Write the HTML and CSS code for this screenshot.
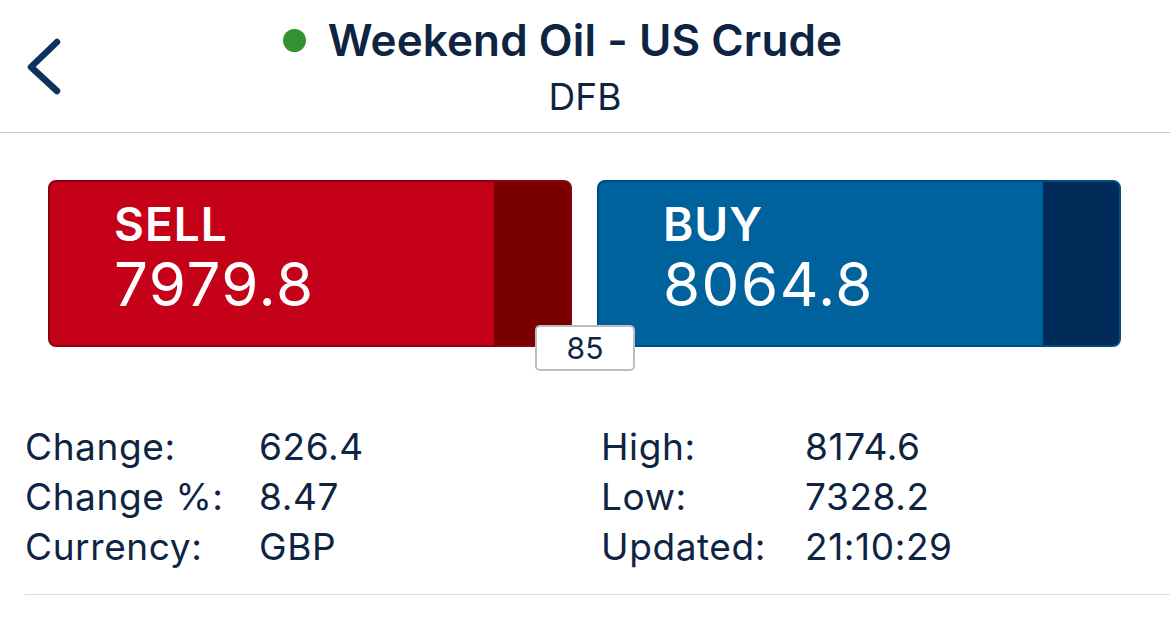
FILE: index.html
```html
<!DOCTYPE html>
<html lang="en">
<head>
  <meta charset="UTF-8" />
  <meta name="viewport" content="width=device-width, initial-scale=1.0" />
  <title>Weekend Oil - US Crude</title>
  <link rel="stylesheet" href="styles.css">
</head>
<body>
  <div class="header">
    <button class="back-btn" aria-label="Back">
      <svg width="44" height="62" viewBox="0 0 44 62">
        <polyline points="37,6 11,31 37,55" fill="none" stroke="#0d3260" stroke-width="6.5" stroke-linecap="round" stroke-linejoin="round" />
      </svg>
    </button>
    <div class="title-block">
      <h1 class="market-name">Weekend Oil - US Crude</h1>
      <div class="market-type">DFB</div>
    </div>
  </div>

  <div class="deal-row">
    <div class="deal-btn sell">
      <div class="deal-main">
        <div class="deal-label">SELL</div>
        <div class="deal-price">7979.8</div>
      </div>
      <div class="deal-strip"></div>
    </div>
    <div class="deal-btn buy">
      <div class="deal-main">
        <div class="deal-label">BUY</div>
        <div class="deal-price">8064.8</div>
      </div>
      <div class="deal-strip"></div>
    </div>
    <div class="spread">85</div>
  </div>

  <div class="stats">
    <div class="stat-label">Change:</div>
    <div class="stat-value">626.4</div>
    <div class="stat-label">High:</div>
    <div class="stat-value">8174.6</div>

    <div class="stat-label">Change %:</div>
    <div class="stat-value">8.47</div>
    <div class="stat-label">Low:</div>
    <div class="stat-value">7328.2</div>

    <div class="stat-label">Currency:</div>
    <div class="stat-value">GBP</div>
    <div class="stat-label">Updated:</div>
    <div class="stat-value">21:10:29</div>
  </div>

  <div class="divider"></div>
</body>
</html>
```

FILE: styles.css
```css
:root {
  --navy: #0e2443;
  --red: #c50019;
  --red-dark: #7a0000;
  --red-border: #8e0012;
  --blue: #00629c;
  --blue-dark: #002b59;
  --blue-border: #004d80;
  --green: #33922f;
}

* {
  box-sizing: border-box;
  margin: 0;
  padding: 0;
}

body {
  background: #ffffff;
  color: var(--navy);
  font-family: Inter, "Noto Sans", sans-serif;
  width: 1170px;
  height: 636px;
  overflow: hidden;
}

.header {
  display: grid;
  grid-template-columns: 1fr auto 1fr;
  align-items: center;
  height: 133px;
  border-bottom: 1px solid #c6c6c6;
}

.back-btn {
  justify-self: start;
  margin-left: 20px;
  margin-top: 2px;
  background: transparent;
  border: none;
  display: flex;
  cursor: pointer;
}

.title-block {
  display: flex;
  flex-direction: column;
  align-items: center;
  padding-top: 18px;
  padding-bottom: 13px;
}

.market-name {
  position: relative;
  font-size: 44px;
  font-weight: 600;
  line-height: 44px;
  letter-spacing: 0.1px;
}

.market-name::before {
  content: "";
  position: absolute;
  left: -45px;
  top: 11px;
  width: 23px;
  height: 23px;
  border-radius: 50%;
  background: var(--green);
}

.market-type {
  margin-top: 13px;
  font-size: 37px;
  line-height: 44px;
}

.deal-row {
  position: relative;
  display: flex;
  gap: 25px;
  margin: 47px 49px 0 48px;
}

.deal-btn {
  flex: 1;
  display: flex;
  height: 167px;
  border-radius: 8px;
  border: 2px solid;
  overflow: hidden;
  color: #ffffff;
}

.deal-btn.sell {
  background: var(--red);
  border-color: var(--red-border);
}

.deal-btn.buy {
  background: var(--blue);
  border-color: var(--blue-border);
}

.deal-main {
  flex: 1;
  padding: 19px 0 0 64px;
}

.deal-strip {
  width: 76px;
}

.sell .deal-strip {
  background: var(--red-dark);
}

.buy .deal-strip {
  background: var(--blue-dark);
}

.deal-label {
  font-size: 46px;
  font-weight: 600;
  line-height: 46px;
  letter-spacing: 1px;
}

.deal-price {
  margin-top: 7px;
  font-size: 60px;
  line-height: 60px;
  letter-spacing: 1.5px;
}

.spread {
  position: absolute;
  left: 487px;
  top: 145px;
  width: 100px;
  height: 46px;
  background: #ffffff;
  border: 2px solid #b9bec3;
  border-radius: 5px;
  display: flex;
  align-items: center;
  justify-content: center;
  font-size: 30px;
}

.stats {
  display: grid;
  grid-template-columns: 234px 342px 204px 1fr;
  margin: 75px 0 0 25px;
  font-size: 37px;
  line-height: 50px;
  letter-spacing: 0.6px;
}

.divider {
  margin: 22px 0 0 25px;
  border-top: 1px solid #dcdcdc;
}
```
